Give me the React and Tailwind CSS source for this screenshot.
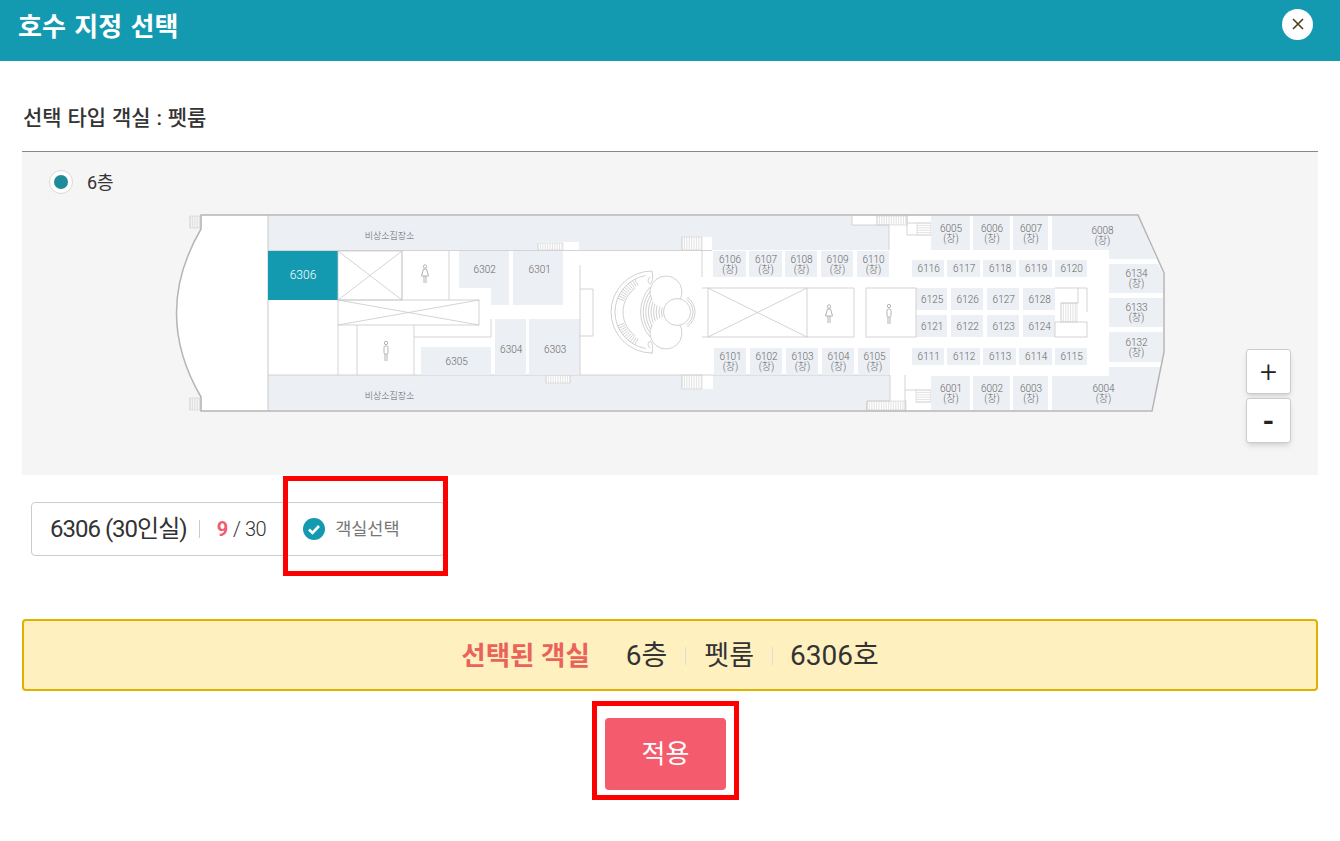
const FONT = 'font-[Roboto,"Noto_Sans_CJK_KR",sans-serif]';
const GREY = '#eceff4';
const LINE = '#c9c9c9';
const LABEL = '#666';
const HULL = 'M201 215 H1138 L1164 273 V352 L1152 411 H201 V397 Q152 313 201 229 Z';

// room: [label, x, y, w, h, second line?]
const rooms = [
  ['6106', 713, 251, 33, 26, true], ['6107', 749, 251, 33, 26, true], ['6108', 785, 251, 32, 26, true],
  ['6109', 821, 251, 32, 26, true], ['6110', 857, 251, 32, 26, true],
  ['6101', 714, 348, 32, 27, true], ['6102', 750, 348, 32, 27, true], ['6103', 786, 348, 32, 27, true],
  ['6104', 822, 348, 32, 27, true], ['6105', 858, 348, 32, 27, true],
  ['6005', 931, 216, 39, 34, true], ['6006', 973, 216, 37, 34, true], ['6007', 1013, 216, 35, 34, true],
  ['6001', 931, 376, 39, 34, true], ['6002', 973, 376, 37, 34, true], ['6003', 1013, 376, 35, 34, true],
  ['6116', 912, 260, 32, 17], ['6117', 947, 260, 33, 17], ['6118', 983, 260, 33, 17], ['6119', 1019, 260, 33, 17], ['6120', 1055, 260, 32, 17],
  ['6125', 916, 288, 31, 22], ['6126', 951, 288, 32, 22], ['6127', 987, 288, 32, 22], ['6128', 1023, 288, 32, 22],
  ['6121', 916, 315, 31, 22], ['6122', 951, 315, 32, 22], ['6123', 987, 315, 32, 22], ['6124', 1023, 315, 32, 22],
  ['6111', 912, 348, 32, 17], ['6112', 947, 348, 33, 17], ['6113', 983, 348, 33, 17], ['6114', 1019, 348, 33, 17], ['6115', 1055, 348, 32, 17],
  ['6133', 1109, 298, 54, 29, true], ['6132', 1109, 332, 54, 30, true],
  ['6303', 529, 319, 51, 60], ['6304', 495, 319, 31, 60],
  ['6305', 421, 347, 70, 28],
];

function RoomLabel({ x, y, label, sub }) {
  if (!sub) {
    return <text x={x + 0.7} y={y + 3.8} textAnchor="middle" fontSize="10" fontWeight="300" fill={LABEL}>{label}</text>;
  }
  return (
    <text textAnchor="middle" fontSize="10" fontWeight="300" fill={LABEL}>
      <tspan x={x + 0.5} y={y - 1.5}>{label}</tspan>
      <tspan x={x + 0.5} y={y + 8.5}>(창)</tspan>
    </text>
  );
}

function Stairs({ x, y, w, h, horizontal }) {
  const lines = [];
  const count = Math.floor((horizontal ? h : w) / 2.4);
  for (let i = 0; i <= count; i++) {
    if (horizontal) lines.push(<line key={i} x1={x} x2={x + w} y1={y + i * 2.4} y2={y + i * 2.4} />);
    else lines.push(<line key={i} x1={x + i * 2.4} x2={x + i * 2.4} y1={y} y2={y + h} />);
  }
  return (
    <g stroke="#cfcfcf" strokeWidth="0.6" fill="none">
      <rect x={x} y={y} width={w} height={h} />
      {lines}
    </g>
  );
}

function Cross({ x, y, w, h }) {
  return (
    <g fill="none" stroke={LINE} strokeWidth="0.8">
      <rect x={x} y={y} width={w} height={h} />
      <line x1={x} y1={y} x2={x + w} y2={y + h} />
      <line x1={x + w} y1={y} x2={x} y2={y + h} />
    </g>
  );
}

function Woman({ x, y }) {
  return (
    <g fill="none" stroke="#aaa" strokeWidth="0.9">
      <circle cx={x} cy={y - 7.5} r="1.7" />
      <path d="M-1.5 -5 H1.5 L3.5 2 H-3.5 Z" transform={`translate(${x} ${y})`} />
      <path d={`M${x - 1} ${y + 2} V${y + 9} M${x + 1} ${y + 2} V${y + 9}`} />
    </g>
  );
}

function Man({ x, y }) {
  return (
    <g fill="none" stroke="#aaa" strokeWidth="0.9">
      <circle cx={x} cy={y - 8} r="1.7" />
      <rect x={x - 2} y={y - 5} width="4" height="8" rx="1.5" />
      <path d={`M${x - 1} ${y + 3} V${y + 10} M${x + 1} ${y + 3} V${y + 10}`} />
    </g>
  );
}

function polar(cx, cy, r, deg) {
  const a = (deg * Math.PI) / 180;
  return [cx + r * Math.cos(a), cy + r * Math.sin(a)];
}

function arc(cx, cy, r, from, to) {
  const [x1, y1] = polar(cx, cy, r, from);
  const [x2, y2] = polar(cx, cy, r, to);
  return `M${x1} ${y1} A${r} ${r} 0 ${Math.abs(to - from) > 180 ? 1 : 0} 1 ${x2} ${y2}`;
}

// centre staircase of the atrium
function Atrium() {
  const ticks = [];
  for (let d = 118; d <= 158; d += 4) {
    const [a, b] = polar(652, 312, 30, d);
    const [c, e] = polar(652, 312, 37, d);
    ticks.push(<line key={`a${d}`} x1={a} y1={b} x2={c} y2={e} />);
    const [f, g] = polar(652, 312, 30, 360 - d);
    const [h, i] = polar(652, 312, 37, 360 - d);
    ticks.push(<line key={`b${d}`} x1={f} y1={g} x2={h} y2={i} />);
  }
  const fan = [];
  for (let r = 14; r <= 40; r += 2.6) {
    fan.push(<path key={r} d={arc(678, 312, r, 180 - 42, 180 + 42)} />);
  }
  return (
    <g fill="none" stroke="#bdbdbd" strokeWidth="0.7">
      <path d={arc(652, 312, 41, 90, 270)} />
      <path d={arc(652, 312, 37, 100, 260)} />
      <path d={arc(652, 312, 29, 125, 235)} />
      {ticks}
      {fan}
      {/* lobes hide the ends of the fan */}
      <circle cx="666" cy="292" r="16" fill="#fff" stroke="none" />
      <circle cx="666" cy="333" r="16" fill="#fff" stroke="none" />
      <path d={arc(666, 292, 16, 150, 395)} />
      <path d={arc(666, 333, 16, -35, 210)} />
      <path d="M652 271 Q654 281 650 284 Q646 281 650 277" />
      <path d="M652 354 Q654 344 650 341 Q646 344 650 348" />
      <path d={arc(677, 312, 18, -55, 55)} />
      <path d={arc(677, 312, 16, -55, 55)} />
      <circle cx="677" cy="312" r="13.5" fill="#fff" />
    </g>
  );
}

function DeckMap() {
  return (
    <svg viewBox="170 205 1000 215" className="block w-[1000px] h-[215px] ml-[148px] mt-[11px]">
      <path d={HULL} fill="#fff" />
      {/* outer bands */}
      <path
        d="M268 216 H852 V225 H889 V250 H712 V237 H682 V250 H579 V242 H538 V250 H268 Z"
        fill={GREY}
      />
      <path
        d="M268 375 H546 V383 H570 V375 H682 V389 H713 V375 H890 V401 H867 V410 H268 Z"
        fill={GREY}
      />
      <line x1="268" x2="268" y1="215" y2="411" stroke={LINE} />
      <line x1="268" x2="712" y1="250.5" y2="250.5" stroke={LINE} strokeWidth="0.8" />
      <line x1="268" x2="890" y1="375" y2="375" stroke={LINE} strokeWidth="0.8" />
      <path d="M852 216 V225 H889 V250" fill="none" stroke={LINE} strokeWidth="0.8" />
      <path d="M890 375 V401 H867 V410" fill="none" stroke={LINE} strokeWidth="0.8" />

      {/* stairs */}
      <Stairs x={190} y={216} w={11} h={12} />
      <Stairs x={190} y={398} w={11} h={12} />
      <Stairs x={538} y={243} w={25} h={7} />
      <Stairs x={546} y={375} w={24} h={8} />
      <Stairs x={682} y={237} w={20} h={13} />
      <Stairs x={682} y={375} w={20} h={14} />
      <Stairs x={877} y={216} w={30} h={9} />
      <Stairs x={867} y={401} w={39} h={9} />
      <Stairs x={917} y={223} w={14} h={12} horizontal />
      <Stairs x={916} y={390} w={15} h={12} horizontal />
      <Stairs x={1061} y={303} w={16} h={19} />

      {/* rooms */}
      <rect x="268" y="251" width="70" height="49" fill="#149ab0" />
      <text x="303" y="279" textAnchor="middle" fontSize="12" fontWeight="300" fill="#fff">6306</text>
      <polygon points="459,251 509,251 509,305 491,305 491,288 459,288" fill={GREY} />
      <rect x="513" y="251" width="50" height="54" fill={GREY} />
      <polygon points="1052,216 1138,216 1156,259 1109,259 1109,250 1052,250" fill={GREY} />
      <polygon points="1109,264 1158,264 1163,274 1163,293 1109,293" fill={GREY} />
      <polygon points="1052,376 1109,376 1109,367 1161,367 1151,410 1052,410" fill={GREY} />
      {rooms.map(([label, x, y, w, h]) => (
        <rect key={label} x={x} y={y} width={w} height={Math.min(h, 56)} fill={GREY} />
      ))}
      {rooms.map(([label, x, y, w, h, sub]) => (
        <RoomLabel key={label} x={x + w / 2} y={y + h / 2} label={label} sub={sub} />
      ))}
      <RoomLabel x={484} y={269} label="6302" />
      <RoomLabel x={539} y={269} label="6301" />
      <RoomLabel x={1102} y={235} label="6008" sub />
      <RoomLabel x={1136} y={278} label="6134" sub />
      <RoomLabel x={1103} y={393} label="6004" sub />
      <text x="389.5" y="239" textAnchor="middle" fontSize="9" fontWeight="300" fill={LABEL}>비상소집장소</text>
      <text x="389.5" y="399" textAnchor="middle" fontSize="9" fontWeight="300" fill={LABEL}>비상소집장소</text>

      {/* voids and rest rooms */}
      <Cross x={338} y={251} w={64} h={49} />
      <Cross x={338} y={300} w={141} h={25} />
      <Cross x={708} y={288} w={99} h={49} />
      <g fill="none" stroke={LINE} strokeWidth="0.8">
        <path d="M402 251 V300 M449 251 V300" />
        <path d="M338 325 V375 M357 325 V375 M414 325 V375 M414 337 H491 V319" />
        <path d="M580 265 V375 M580 289 H593 V336 H580" />
        <path d="M702 250 V277 M702 288 H708 M702 337 H708" />
        <path d="M807 288 H854 V337 H807" />
        <rect x="866" y="288" width="50" height="49" />
        <path d="M907 215 V235 H917 M907 223 H917" />
        <path d="M905 375 V411 M905 390 H916" />
        <path d="M1055 288 H1087 V312 M1078 288 V303 H1061 M1055 322 H1087 V337 H1055 Z" />
      </g>
      <Woman x={425} y={274} />
      <Man x={386} y={351} />
      <Woman x={829} y={314} />
      <Man x={889} y={314} />
      <Atrium />
      <path d={HULL} fill="none" stroke="#b5b5b5" strokeWidth="1.5" />
    </svg>
  );
}

export default function App() {
  return (
    <div className={`${FONT} w-[1340px] h-[841px] bg-white overflow-hidden`}>
      <header className="h-[61px] bg-[#149ab0] flex items-center justify-between pl-[18px] pr-[27px] pb-[8px]">
        <h1 className="text-[26px] leading-[34px] font-bold text-white [word-spacing:2px]">호수 지정 선택</h1>
        <button className="w-[31px] h-[31px] -mt-[5px] rounded-full bg-white flex items-center justify-center">
          <svg viewBox="0 0 12 12" className="w-[12px] h-[12px]" fill="none" stroke="#4a3f1c" strokeWidth="1.6">
            <path d="M1 1 L11 11 M11 1 L1 11" />
          </svg>
        </button>
      </header>

      <main className="px-[22px]">
        <div className="h-[90px] pt-[42px] pl-px text-[21px] leading-[30px] font-medium text-[#333] [word-spacing:0.6px]">
          선택 타입 객실 : 펫룸
        </div>

        <section className="relative h-[324px] border-t border-[#888] bg-[#f5f5f5] pt-[18px]">
          <div className="flex items-center pl-[27px] h-[24px]">
            <span className="w-[24px] h-[24px] rounded-full bg-white border border-[#d8d8d8] flex items-center justify-center">
              <span className="w-[14px] h-[14px] rounded-full bg-[#1f8c9a]" />
            </span>
            <span className="ml-[14px] text-[18px] text-[#333]">6층</span>
          </div>
          <DeckMap />
          <div className="absolute left-[1224px] top-[197px] flex flex-col gap-[4px]">
            <button className="w-[45px] h-[45px] bg-white border border-[#ccc] rounded-[3px] shadow-md text-[30px] leading-none font-light text-[#222]">+</button>
            <button className="w-[45px] h-[45px] bg-white border border-[#ccc] rounded-[3px] shadow-md text-[30px] leading-none font-bold text-[#222]">-</button>
          </div>
        </section>

        <div className="relative mt-[27px] ml-[9px] w-[414px] h-[54px] border border-[#ccc] rounded-[4px] flex items-center pl-[18px] text-[#333]">
          <span className="text-[24px] tracking-[-1px]">6306 (30인실)</span>
          <span className="w-px h-[18px] bg-[#ccc] ml-[12px]" />
          <span className="ml-[17px] text-[20px] font-bold text-[#f25c6e]">9</span>
          <span className="ml-[5px] text-[20px] font-light tracking-[-0.5px] text-[#333]">/ 30</span>
          <svg viewBox="0 0 22 22" className="w-[22px] h-[22px] ml-[37px]">
            <circle cx="11" cy="11" r="11" fill="#149ab0" />
            <path d="M6 11.5 L9.5 15 L16 8" fill="none" stroke="#fff" strokeWidth="2.6" />
          </svg>
          <span className="ml-[10px] text-[17.5px] text-[#777]">객실선택</span>
          <div className="absolute left-[251px] -top-[27px] w-[165px] h-[100px] border-[5px] border-[#ff0000]" />
        </div>

        <div className="mt-[63px] h-[72px] pt-[2px] bg-[#fff0c0] border-2 border-[#e2b100] rounded-[4px] flex items-center justify-center text-[28px] text-[#333]">
          <strong className="text-[26.5px] font-bold text-[#e9635a]">선택된 객실</strong>
          <span className="ml-[36px]">6층</span>
          <span className="w-px h-[18px] bg-[#ddd] mx-[18px]" />
          <span className="text-[27px]">펫룸</span>
          <span className="w-px h-[18px] bg-[#ddd] ml-[18px] mr-[17px]" />
          <span>6306호</span>
        </div>

        <div className="relative mt-[27px] ml-[583px] w-[121px]">
          <button className="w-[121px] h-[72px] pt-px bg-[#f45c6d] rounded-[4px] text-[26px] text-white">적용</button>
          <div className="absolute -left-[13px] -top-[17px] w-[147px] h-[99px] border-[5px] border-[#ff0000]" />
        </div>
      </main>
    </div>
  );
}
